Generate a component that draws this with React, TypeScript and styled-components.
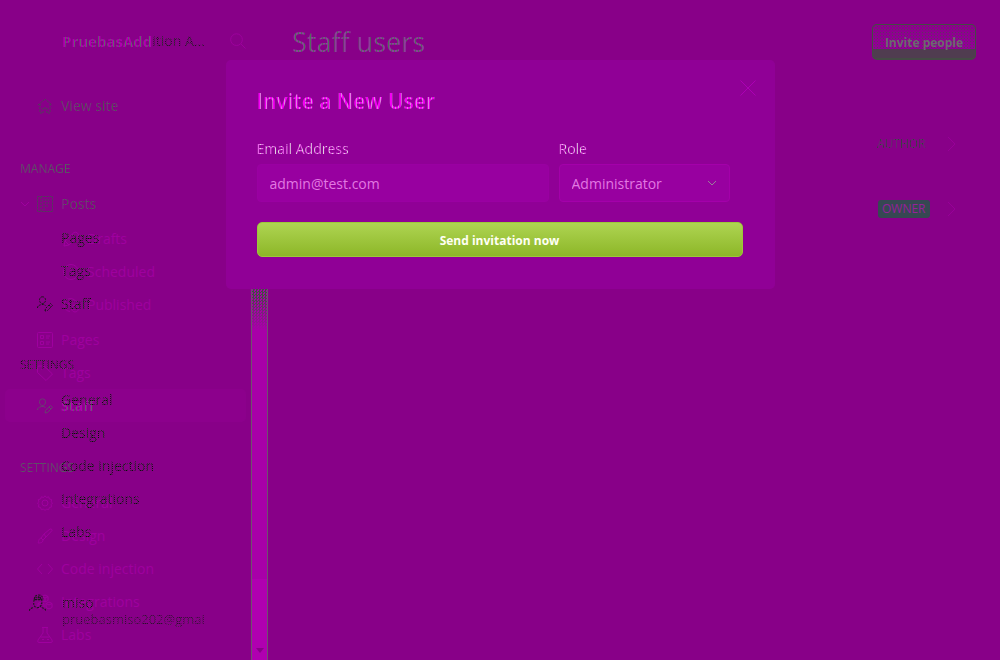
import React from "react";
import styled, { createGlobalStyle, css } from "styled-components";

const Global = createGlobalStyle`
  * { box-sizing: border-box; }
  html, body { margin: 0; min-height: 100%; background: #880088; }
  body { font-family: "Open Sans", "Noto Sans", sans-serif; font-size: 14px; line-height: 20px; overflow: hidden; }
`;

const fringe = (a: string, b: string) => css`
  background-image: repeating-linear-gradient(90deg, ${a} 0 1px, ${b} 1px 3px);
  background-clip: text;
  color: transparent;
`;

const dots = css`
  background-image: conic-gradient(#081008 25%, transparent 0 50%, #203020 0 75%, #501050 0);
  background-size: 2px 2px;
  background-clip: text;
  color: transparent;
`;

const Shell = styled.div`
  position: relative;
  display: flex;
  height: 100vh;
  overflow: hidden;
  background: #880088;
`;

const Sidebar = styled.aside`
  flex: 0 0 251px;
  padding: 24px 5px 0;
`;

const Brand = styled.header`
  display: flex;
  align-items: center;
  height: 34px;
  padding: 0 0 0 57px;
`;

const BrandName = styled.strong`
  font-size: 15px;
  ${fringe("#66606e", "#b000b0")}
`;

const BrandTail = styled.span`
  flex: 1;
  white-space: pre;
  opacity: 0.8;
  ${dots}
`;

const IconButton = styled.button`
  display: flex;
  padding: 0;
  border: 0;
  background: none;
  color: #9d009d;
`;

const Nav = styled.nav`
  display: flex;
  flex-direction: column;
`;

const SectionTitle = styled.h2<{ $top: number; $ghost?: boolean }>`
  margin: ${(p) => p.$top}px 0 10px;
  padding-left: 15px;
  font-size: 12px;
  line-height: 16px;
  font-weight: 400;
  ${(p) => (p.$ghost ? dots : fringe("#4c6858", "#6a4070"))}
`;

const Item = styled.a<{ $sub?: boolean; $tone?: "dim" | "green" | "active"; $gap?: number }>`
  display: flex;
  align-items: center;
  gap: 8px;
  height: 33px;
  margin-top: ${(p) => p.$gap || 0}px;
  padding-left: ${(p) => (p.$sub ? 58 : 32)}px;
  border-radius: 5px;
  color: ${(p) => (p.$tone === "dim" || !p.$tone ? "#9f009f" : "#684070")};
  background: ${(p) => (p.$tone === "active" ? "#8c008c" : "none")};
  font-weight: ${(p) => (p.$tone === "active" ? 700 : 400)};
  text-decoration: none;
  position: relative;
`;

const ItemText = styled.span<{ $tone?: string }>`
  ${(p) => p.$tone === "green" && fringe("#486048", "#783080")}
  ${(p) => p.$tone === "active" && fringe("#66606e", "#b000b0")}
`;

const Caret = styled.span`
  position: absolute;
  left: 12px;
  display: flex;
  color: #9f009f;
`;

const GhostLayer = styled.div`
  position: absolute;
  left: 0;
  top: 221px;
  width: 251px;
  pointer-events: none;
`;

const GhostRow = styled.div`
  display: flex;
  align-items: center;
  gap: 8px;
  height: 33px;
  padding-left: 37px;
`;

const GhostText = styled.span`
  ${dots}
`;

const GhostSpace = styled.span`
  width: 16px;
`;

const GhostTitle = styled(SectionTitle)`
  padding-left: 20px;
`;

const GhostUser = styled.div`
  display: flex;
  gap: 16px;
  padding: 46px 0 0 29px;
`;

const GhostLines = styled.div`
  display: flex;
  flex-direction: column;
  line-height: 17px;
  white-space: nowrap;
`;

const GhostMail = styled(GhostText)`
  font-size: 13px;
  opacity: 0.7;
`;

const Scroll = styled.div`
  flex: 0 0 17px;
  display: flex;
  flex-direction: column;
  margin-top: 280px;
  border: solid #70506f;
  border-width: 0 1px;
  background: #a800a8;
`;

const Grain = styled.div`
  height: 50px;
  background-image: conic-gradient(#405040 25%, transparent 0 50%, #405040 0 75%, transparent 0);
  background-size: 3px 3px;
  mask-image: linear-gradient(#000 30%, transparent);
`;

const Thumb = styled.div`
  display: flex;
  align-items: flex-end;
  justify-content: center;
  height: 81px;
  margin-top: auto;
  padding-bottom: 7px;
  background: #b000b0;
`;

const Main = styled.main`
  flex: 1;
  padding: 24px 24px 0;
`;

const TopBar = styled.header`
  display: flex;
  justify-content: space-between;
  align-items: flex-start;
`;

const Title = styled.h1`
  margin: 0;
  font-size: 27px;
  line-height: 36px;
  font-weight: 400;
  ${fringe("#526c5c", "#8c409a")}
`;

const InviteButton = styled.button`
  width: 104px;
  height: 36px;
  padding: 2px 0 0;
  border: 1px solid #444c44;
  border-bottom-width: 2px;
  border-radius: 5px;
  background:
    linear-gradient(transparent 74%, #503c50 74%),
    radial-gradient(circle, #5c3a5c 0 1px, transparent 1px) 0 0 / 3px 3px,
    linear-gradient(#8c008c, #94009a);
  color: #6c696e;
  font: 700 12px "Open Sans", sans-serif;
`;

const UserList = styled.ul`
  display: flex;
  flex-direction: column;
  gap: 45px;
  margin: 74px 16px 0 0;
  padding: 0;
  list-style: none;
`;

const User = styled.li`
  display: flex;
  justify-content: flex-end;
  align-items: center;
  height: 20px;
  color: #980098;
`;

const RoleCell = styled.div`
  width: 83px;
  display: flex;
  justify-content: space-between;
  align-items: center;
`;

const Author = styled.span`
  font-size: 12px;
  ${fringe("#304438", "#682870")}
`;

const Owner = styled.span`
  margin-left: 1px;
  padding: 0 4px;
  border-radius: 3px;
  background: #364852;
  color: #95219b;
  font-size: 12px;
  line-height: 18px;
`;

const Overlay = styled.div`
  position: absolute;
  inset: 0;
  display: flex;
  justify-content: center;
  align-items: flex-start;
  padding: 60px 20px 0;
`;

const Dialog = styled.form`
  position: relative;
  width: 100%;
  max-width: 549px;
  padding: 26px 32px 32px 31px;
  border-radius: 5px;
  background: #900096;
`;

const Close = styled(IconButton)`
  position: absolute;
  top: 20px;
  right: 19px;
  color: #ac00b4;
`;

const DialogTitle = styled.h2`
  margin: 0 0 24px;
  font-size: 21px;
  line-height: 30px;
  font-weight: 600;
  ${fringe("#e080e0", "#f500f5")}
`;

const Fields = styled.div`
  display: flex;
  gap: 10px;
  margin-bottom: 20px;
  padding-right: 13px;
`;

const Field = styled.div<{ $grow?: boolean }>`
  position: relative;
  display: flex;
  flex-direction: column;
  flex: ${(p) => (p.$grow ? "1" : "0 0 171px")};
  min-width: 0;
`;

const Label = styled.label`
  margin-bottom: 6px;
  font-size: 14px;
  line-height: 18px;
  align-self: flex-start;
  ${fringe("#e0d0e0", "#e860e8")}
`;

const control = css`
  width: 100%;
  height: 38px;
  padding: 1px 12px 0;
  border: 1px solid #9a00a2;
  border-radius: 4px;
  background: #9800a0;
  color: #e278e2;
  font: 14px "Open Sans", sans-serif;
  outline: 0;
`;

const Input = styled.input`
  ${control}
`;

const Select = styled.select`
  ${control}
  appearance: none;
  border-color: #a400aa;
`;

const SelectArrow = styled.span`
  position: absolute;
  right: 10px;
  bottom: 11px;
  display: flex;
  color: #98809a;
  pointer-events: none;
`;

const Send = styled.button`
  display: block;
  width: 100%;
  height: 35px;
  padding: 2px 0 0;
  border: 1px solid #9cc83a;
  border-radius: 5px;
  background: linear-gradient(#aed452, #8db728);
  color: #fffff4;
  font: 700 12px "Open Sans", sans-serif;
`;

const shapes: Record<string, React.ReactNode> = {
  home: <path d="M1 7 8 1l7 6M3 6v9h3v-5h4v5h3V6" />,
  posts: <path d="M.5.5h15v15H.5zM4 1v14M6 4h7M6 7h7M6 10h5M6 13h3" />,
  pen: <path d="M1 15 2 10 11 1.500q2-1 3.500.5t.5 3.500L6 14zM2 10l4 4M9 3l4 4" />,
  clock: <path d="M8 .5a7.500 7.500 0 1 0 0 15 7.500 7.500 0 0 0 0-15zM8 4v5h4" />,
  published: <path d="M7 14.500A6.500 6.500 0 1 1 14 7M5 6l3 3M12 8a3.500 3.500 0 1 0 .1 0M10.500 12l1 1 2-2.500" />,
  pages: <path d="M1.500.5h13q1 0 1 1v13q0 1-1 1h-13q-1 0-1-1v-13q0-1 1-1zM3.500 3.500h3v3h-3zM3.500 9.500h3v3h-3zM9 4h4M9 6h3M9 10h4M9 12h3" />,
  tag: <path d="M.5 2.500v5l8.500 8 6.500-6.500L7 1H2Q.5 1 .5 2.500zM4 4.500h.5" />,
  staff: <path d="M5.500.8a3 3 0 0 0-3 3c0 2 1 3.700 3 3.700s3-1.700 3-3.700a3 3 0 0 0-3-3zM.5 12c0-2 1-2.500 4-3.500h2l2 1M8 15l.5-2.500 5-5 2 2-5 5zM12 9l2 2" />,
  gear: <path d="m8 .8 1.500 1.700 2.200-.7.7 2.200 2.300.6-.6 2.200L15.500 8l-1.400 1.700.6 2.200-2.300.5-.7 2.300-2.200-.7L8 15.500 6.500 14l-2.200.7-.7-2.300-2.300-.5.6-2.200L.5 8l1.400-1.200-.6-2.200 2.300-.6.7-2.200 2.200.7zM8 5a3 3 0 1 0 0 6 3 3 0 0 0 0-6" />,
  brush: <path d="M1 15c1-1 0-4 3-5l2 2c0 3-3 3-5 3zM4 10l3-4 2 3-3 3M7 6l6-5q2-.5 2 1.500L9 9" />,
  code: <path d="m5 3-4.500 5L5 13M11 3l4.500 5-4.500 5" />,
  cubes: <path d="m8 1 3 1.500v4L8 8 5 6.500v-4zM5 2.500 8 4l3-1.500M8 4v4M4 8l3 1.500v4L4 15l-3-1.500v-4zM12 8l3 1.500v4L12 15l-3-1.500v-4zM1 9.500 4 11l3-1.500M9 9.500l3 1.500 3-1.500" />,
  flask: <path d="M5 .5h6M6 1v5L1 13q-1 2.500 1 2.500h12q2 0 1-2.500l-5-7V1M3.500 10h9M5 12.500h2M10 12.500h2" />,
  search: <path d="M6.500.8a5.800 5.800 0 1 0 0 11.700 5.800 5.800 0 0 0 0-11.700M11 11l4.500 4.500" />,
  close: <path d="m.5.5 15 15M15.500.5l-15 15" />,
  down: <path d="m4 6 4 4 4-4" />,
  right: <path d="m4 1 7 7-7 7" />,
  person: <path d="M5 5q-2 7 3 8 5-1 4-8Q8 6 5 5zM5 5q0-4 4-4t4 4M6 3h6M6 5h5M9 2v3M11 3v2M0 16q1-3 4-3M12 13q3 0 4 3" />,
};

function Icon({ name, color, dashed, size = 16 }: { name: string; color?: string; dashed?: boolean; size?: number }) {
  return (
    <svg width={size} height={size} viewBox="0 0 16 16" fill="none" stroke={color || "currentColor"} strokeWidth="1" strokeDasharray={dashed ? "2 1" : undefined} aria-hidden="true">
      {shapes[name]}
    </svg>
  );
}

type Entry = { icon: string; text: string; tone?: "dim" | "green" | "active"; sub?: boolean; gap?: number };

const manage: Entry[] = [
  { icon: "posts", text: "Posts", tone: "green" },
  { icon: "pen", text: "Drafts", sub: true, gap: 2 },
  { icon: "clock", text: "Scheduled", sub: true },
  { icon: "published", text: "Published", sub: true },
  { icon: "pages", text: "Pages", gap: 2 },
  { icon: "tag", text: "Tags" },
  { icon: "staff", text: "Staff", tone: "active" },
];

const settings: Entry[] = [
  { icon: "gear", text: "General" },
  { icon: "brush", text: "Design" },
  { icon: "code", text: "Code injection" },
  { icon: "cubes", text: "Integrations" },
  { icon: "flask", text: "Labs" },
];

function NavItem({ icon, text, tone, sub, gap }: Entry) {
  return (
    <Item href="#" $tone={tone} $sub={sub} $gap={gap}>
      {icon === "posts" && <Caret><Icon name="down" /></Caret>}
      <Icon name={icon} dashed={tone === "green"} color={tone === "green" ? "#504058" : undefined} />
      <ItemText $tone={tone}>{text}</ItemText>
    </Item>
  );
}

function Ghost({ text, icon }: { text: string; icon?: string }) {
  return (
    <GhostRow>
      {icon ? <Icon name={icon} color="#181818" dashed /> : <GhostSpace />}
      <GhostText>{text}</GhostText>
    </GhostRow>
  );
}

export default function App() {
  return (
    <>
      <Global />
      <Shell>
        <Sidebar>
          <Brand>
            <BrandName>PruebasAdd</BrandName>
            <BrandTail>{"ition A..."}</BrandTail>
            <IconButton aria-label="Search"><Icon name="search" /></IconButton>
          </Brand>
          <Nav>
            <NavItem icon="home" text="View site" tone="green" gap={31} />
            <SectionTitle $top={39}>MANAGE</SectionTitle>
            {manage.map((e) => <NavItem key={e.text} {...e} />)}
            <SectionTitle $top={38}>SETTINGS</SectionTitle>
            {settings.map((e) => <NavItem key={e.text} {...e} />)}
          </Nav>
        </Sidebar>
        <Scroll>
          <Grain />
          <Thumb>
            <svg width="8" height="5" viewBox="0 0 8 5" aria-hidden="true"><path d="M0 0h8L4 5z" fill="#880088" /></svg>
          </Thumb>
        </Scroll>
        <Main>
          <TopBar>
            <Title>Staff users</Title>
            <InviteButton>Invite people</InviteButton>
          </TopBar>
          <UserList>
            <User><RoleCell><Author>AUTHOR</Author><Icon name="right" /></RoleCell></User>
            <User><RoleCell><Owner>OWNER</Owner><Icon name="right" /></RoleCell></User>
          </UserList>
        </Main>
        <GhostLayer aria-hidden="true">
          <Ghost text="Pages" />
          <Ghost text="Tags" />
          <Ghost text="Staff" icon="staff" />
          <GhostTitle as="div" $top={37} $ghost>SETTINGS</GhostTitle>
          <Ghost text="General" />
          <Ghost text="Design" />
          <Ghost text="Code injection" />
          <Ghost text="Integrations" />
          <Ghost text="Labs" />
          <GhostUser>
            <Icon name="person" color="#181818" dashed size={17} />
            <GhostLines>
              <GhostText>miso</GhostText>
              <GhostMail>pruebasmiso202@gmai</GhostMail>
            </GhostLines>
          </GhostUser>
        </GhostLayer>
        <Overlay>
          <Dialog role="dialog" aria-labelledby="invite-title" onSubmit={(e) => e.preventDefault()}>
            <Close type="button" aria-label="Close"><Icon name="close" /></Close>
            <DialogTitle id="invite-title">Invite a New User</DialogTitle>
            <Fields>
              <Field $grow>
                <Label htmlFor="email">Email Address</Label>
                <Input id="email" type="email" defaultValue="admin@test.com" />
              </Field>
              <Field>
                <Label htmlFor="role">Role</Label>
                <Select id="role" defaultValue="Administrator">
                  <option>Administrator</option>
                  <option>Editor</option>
                  <option>Author</option>
                </Select>
                <SelectArrow><Icon name="down" /></SelectArrow>
              </Field>
            </Fields>
            <Send type="submit">Send invitation now</Send>
          </Dialog>
        </Overlay>
      </Shell>
    </>
  );
}
